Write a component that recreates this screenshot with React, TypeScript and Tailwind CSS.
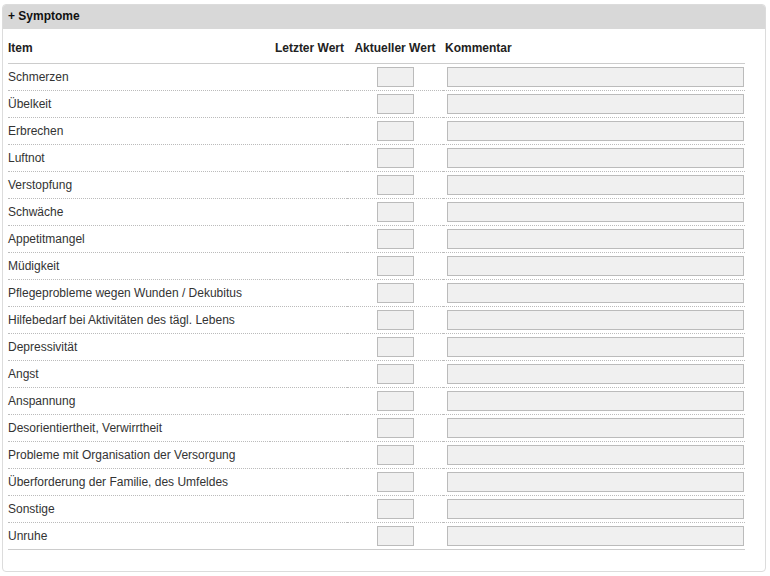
import React from 'react';

const items = [
  'Schmerzen',
  'Übelkeit',
  'Erbrechen',
  'Luftnot',
  'Verstopfung',
  'Schwäche',
  'Appetitmangel',
  'Müdigkeit',
  'Pflegeprobleme wegen Wunden / Dekubitus',
  'Hilfebedarf bei Aktivitäten des tägl. Lebens',
  'Depressivität',
  'Angst',
  'Anspannung',
  'Desorientiertheit, Verwirrtheit',
  'Probleme mit Organisation der Versorgung',
  'Überforderung der Familie, des Umfeldes',
  'Sonstige',
  'Unruhe',
];

export default function App() {
  return (
    <div className="min-h-[576px] bg-white pt-1 px-[2px] text-[12px] text-[#333] font-['Liberation_Sans',Arial,sans-serif]">
      <div className="w-[764px] h-[568px] rounded-[4px] border border-[#dcdcdc] overflow-hidden">
        {/* header */}
        <div className="h-6 bg-[#d8d8d8] flex items-center px-[5px] pb-[2px] font-bold text-[#111]">
          + Symptome
        </div>

        <div className="pl-[5px] pr-[20px]">
          {/* column heads */}
          <div className="grid grid-cols-[262px_77px_96px_1fr] h-[35px] pt-1 items-center border-b border-[#cccccc] font-bold text-[#222]">
            <div>Item</div>
            <div className="text-right pr-[3px]">Letzter Wert</div>
            <div className="text-center">Aktueller Wert</div>
            <div className="pl-[2px]">Kommentar</div>
          </div>

          {items.map((item, i) => {
            const last = i === items.length - 1;
            const line = last
              ? 'border-b border-solid border-[#cccccc]'
              : 'border-b border-dotted border-[#bbbbbb]';
            return (
              <div key={item} className="grid grid-cols-[262px_77px_96px_1fr] h-[27px]">
                <div className={`flex items-center ${line}`}>{item}</div>
                <div className={line}></div>
                <div className={`flex items-center justify-center ${line}`}>
                  <div className="w-[37px] h-5 bg-[#f0f0f0] border border-[#bbbbbb]"></div>
                </div>
                <div className={`flex items-center pl-[4px] ${line}`}>
                  <div className="w-[297px] h-5 bg-[#f0f0f0] border border-[#bbbbbb]"></div>
                </div>
              </div>
            );
          })}
        </div>
      </div>
    </div>
  );
}
